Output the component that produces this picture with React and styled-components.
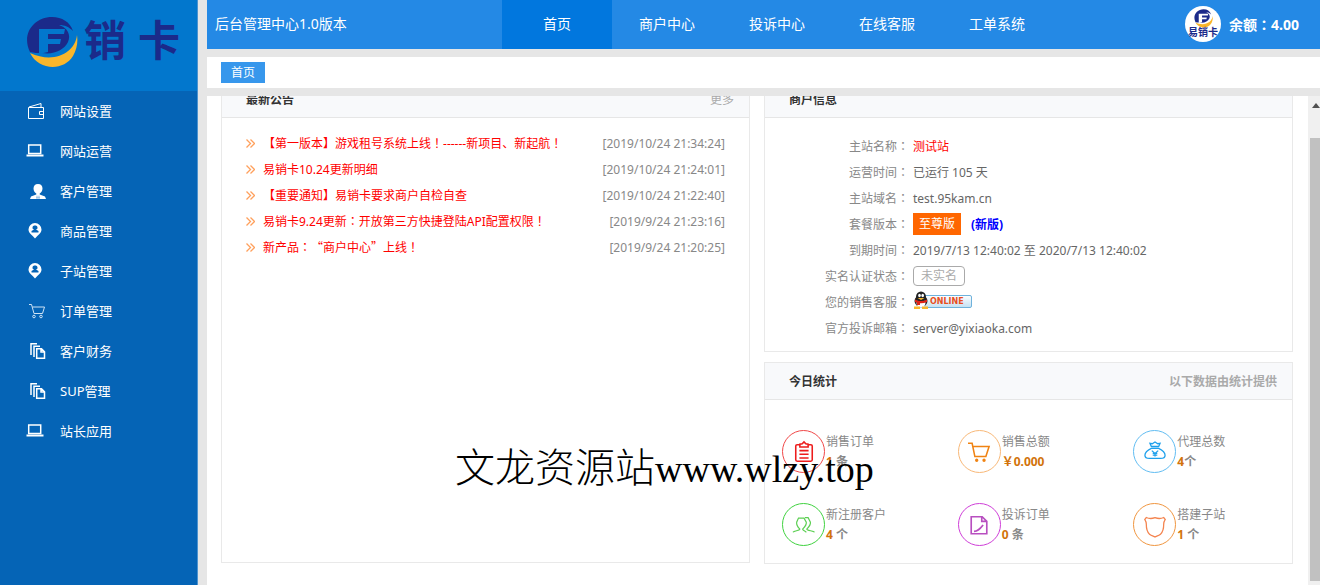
import React from 'react'
import styled, { createGlobalStyle } from 'styled-components'

const GlobalStyle = createGlobalStyle`
    *{
        box-sizing:border-box;
    }
    body{
        margin:0;
        background:#e6e6e6;
        font-family:"Noto Sans","Noto Sans CJK SC",sans-serif;
        font-size:12px;
        color:#666;
        text-spacing-trim:space-all;
    }
    a{
        color:inherit;
        text-decoration:none;
    }
    ul,dl,dd,h2,p{
        margin:0;
        padding:0;
        list-style:none;
    }
`
const Layout = styled.div`
    display:flex;
    gap:9px;
    height:100vh;
    overflow:hidden;
`
const Sidebar = styled.aside`
    flex:0 0 198px;
    background:#0564b6;
    border-right:1px solid #4d93cf;
`
const Logo = styled.a`
    display:flex;
    align-items:flex-start;
    gap:6px;
    height:91px;
    padding:16px 0 0 26px;
    background:#0277cd;
    svg{
        flex:none;
    }
`
const LogoName = styled.span`
    display:flex;
    gap:12px;
    font-family:"Noto Sans CJK SC",sans-serif;
    font-size:42px;
    line-height:44px;
    font-weight:700;
    color:#1b2a8a;
`
const MenuLink = styled.a`
    display:flex;
    align-items:center;
    height:40px;
    font-size:13px;
    color:#fff;
    svg{
        width:18px;
        height:18px;
        margin:0 15px 0 27px;
    }
    span{
        padding-bottom:2px;
    }
`
const Main = styled.div`
    flex:1;
    min-width:0;
    display:flex;
    flex-direction:column;
    gap:8px;
`
const Header = styled.header`
    flex:none;
    display:flex;
    height:49px;
    background:#2489e5;
    font-size:14px;
    line-height:47px;
    color:#fff;
`
const Version = styled.span`
    flex:0 0 295px;
    padding-left:8px;
`
const Nav = styled.nav`
    display:flex;
`
const NavLink = styled.a`
    width:110px;
    text-align:center;
    background:${props => props.$active ? '#0177de' : 'none'};
`
const Account = styled.div`
    display:flex;
    align-items:center;
    gap:8px;
    height:48px;
    margin-left:auto;
    padding-right:21px;
    font-weight:bold;
`
const TabBar = styled.div`
    flex:none;
    display:flex;
    align-items:center;
    height:31px;
    padding-left:14px;
    background:#fff;
`
const Tab = styled.button`
    height:21px;
    padding:0 10px;
    border:none;
    background:#3797ec;
    color:#fff;
    font:inherit;
    line-height:21px;
`
const Body = styled.div`
    flex:1;
    min-height:0;
    display:flex;
    background:#fff;
`
const Content = styled.main`
    flex:1;
    min-width:0;
    overflow-y:auto;
    scrollbar-width:none;
    display:flex;
    align-items:flex-start;
    gap:14px;
    padding:15px 15px 0 14px;
`
const Column = styled.div`
    flex:1;
    min-width:0;
    display:grid;
    gap:10px;
    padding-bottom:40px;
`
const Panel = styled.section`
    border:1px solid #e9e9e9;
    min-height:${props => props.$tall ? '483px' : '0'};
`
const PanelHead = styled.div`
    display:flex;
    align-items:center;
    justify-content:space-between;
    height:37px;
    padding:0 15px 0 24px;
    background:#f8f9fb;
    border-bottom:1px solid #e6e6e6;
    color:#aaa;
    h2{
        font-size:12px;
        color:#333;
    }
`
const NewsList = styled.ul`
    padding:12px 24px;
`
const NewsItem = styled.li`
    display:flex;
    align-items:center;
    height:26px;
    svg{
        flex:none;
        margin-right:8px;
    }
    a{
        color:#f00;
    }
    time{
        margin-left:auto;
        color:#888;
    }
`
const InfoList = styled.dl`
    display:grid;
    grid-template-columns:144px 1fr;
    grid-auto-rows:26px;
    column-gap:4px;
    align-items:center;
    padding:15px 0 10px;
    dt{
        text-align:right;
        color:#888;
    }
    dd{
        display:flex;
        align-items:center;
    }
`
const SiteName = styled.span`
    color:#f00;
`
const Package = styled.span`
    padding:0 6px;
    line-height:22px;
    background:#f60;
    color:#fff;
`
const NewVersion = styled.a`
    margin-left:10px;
    font-weight:bold;
    color:#00f;
`
const VerifyButton = styled.button`
    height:20px;
    padding:0 7px;
    border:1px solid #aaa;
    border-radius:4px;
    background:#fff;
    color:#aaa;
    font:inherit;
    line-height:18px;
`
const OnlineLink = styled.a`
    display:flex;
    padding-bottom:4px;
`
const Stats = styled.ul`
    display:grid;
    grid-template-columns:repeat(3,1fr);
    row-gap:30px;
    padding:30px 0 17px;
`
const Stat = styled.li`
    display:flex;
    align-items:center;
    gap:1px;
    height:43px;
    padding-left:17px;
    color:#888;
    line-height:20px;
    strong{
        font-weight:700;
        color:#d2730a;
    }
    b{
        display:block;
        white-space:pre;
    }
`
const StatIcon = styled.span`
    flex:none;
    display:flex;
    align-items:center;
    justify-content:center;
    width:43px;
    height:43px;
    border:1px solid ${props => props.$color};
    border-radius:50%;
`
const ScrollBar = styled.div`
    flex:0 0 12px;
    display:flex;
    flex-direction:column;
    align-items:flex-end;
    padding:7px 0 4px;
    background:#f0f0f0;
`
const Thumb = styled.div`
    flex:1;
    width:10px;
    margin-top:30px;
    background:#c1c1c1;
`
const Watermark = styled.p`
    position:absolute;
    left:455px;
    top:444px;
    display:flex;
    align-items:baseline;
    font-family:"Liberation Serif","Noto Sans CJK SC",serif;
    font-size:38px;
    line-height:50px;
    color:#000;
    pointer-events:none;
    span{
        font-size:40px;
        font-weight:300;
    }
`
const Wide = styled.span`
    font-family:"Noto Sans CJK TC",sans-serif;
`

//全角标点居中显示
const punct = text => text.split(/([：！“”])/).map((part, i) => (
    i % 2 ? <Wide key={i}>{part}</Wide> : part
))

const Mark = ({ size, letter }) => (
    <svg width={size} height={size} viewBox="0 0 52 52">
        <path fill="#1b2a8a" d="M4 36C-5 18 8 1 26 1c10 0 18 5 21 14-4-4-8-6-14-6 9 3 12 10 9 17-4 8-14 13-26 11-4 0-8 0-12-1z" />
        <path fill="#f9b62b" d="M4 37c9 18 34 18 43 3 4-7 5-14 4-21C49 37 28 48 4 37z" />
        <path fill={letter} d="M13 13h26l-1 5H22v5h13l-1 5H22v8l-9 2z" />
    </svg>
)

const Avatar = () => (
    <svg width="36" height="36" viewBox="0 0 36 36">
        <circle cx="18" cy="18" r="18" fill="#fff" />
        <svg x="9" y="3" width="19" height="19" viewBox="0 0 52 52"><Mark size={52} letter="#fff" /></svg>
        <text x="18" y="30" fontSize="10" fontWeight="700" textAnchor="middle" fill="#1b2a8a" fontFamily="Noto Sans CJK SC, sans-serif">易销卡</text>
    </svg>
)

const menuIcons = {
    wallet: <g fill="none" stroke="#fff"><path d="M1.500 5.500h15v11h-15zM2 5l12-3.500V5M16 9.500h-3.500v3H16" /></g>,
    laptop: <g><path fill="none" stroke="#fff" strokeWidth="1.500" d="M1.700 3h12v8.500h-12z" /><path fill="#fff" d="M-.5 12.500h17v2h-17z" /></g>,
    user: <path fill="#fff" d="M11 2c3 0 4.500 2 4.500 4.500S14 11 12.700 11.500v1L18 14.500 19 17H3l1-2.500 5.300-2v-1C8 11 6.500 9 6.500 6.500S8 2 11 2zM10 13l-.5 3.500h1zM12 13l-.5 3.500h1z" fillRule="evenodd" />,
    pin: <path fill="#fff" fillRule="evenodd" d="M8 1a6.500 6.500 0 0 1 6.500 6.500C14.500 11 11 13 8 16.500 5 13 1.500 11 1.500 7.500A6.500 6.500 0 0 1 8 1zM8 3.500a2 2 0 0 0-1 4L4.500 9v1.500h7V9L9 7.500a2 2 0 0 0-1-4z" />,
    cart: <g fill="none" stroke="#cfe3f5"><path d="M2 2.500h2.500l2.500 9h8.500L17.500 5H5.500" /><circle cx="7" cy="14.500" r="1.300" /><circle cx="14" cy="14.500" r="1.300" /></g>,
    files: <g fill="none" stroke="#fff" strokeWidth="1.500"><path d="M4 13V1.700h6M7 15V4.200h6M9.700 6.700h4.800l3 3v6.500H9.700zM14 7v3h3.500" /></g>
}

const statIcons = {
    order: <g fill="none" stroke="#ed1c1c" strokeWidth="1.700"><path d="M8 4H4.500Q3 4 3 5.500v15Q3 22 4.500 22h15q1.500 0 1.500-1.500v-15Q21 4 19.500 4H16M7.500 6.500v-3l2.500-.5 2-2 2 2 2.500.5v3zM7 10.500h10M7 14.500h10M7 18.500h10" /></g>,
    cart: <g fill="none" stroke="#f08313" strokeWidth="1.700"><path d="M0 2.500h4.500l3 14.500h12l3.500-11H6" /><circle cx="9.500" cy="21" r="1" fill="#f08313" /><circle cx="17.500" cy="21" r="1" fill="#f08313" /></g>,
    money: <g fill="none" stroke="#1ea0ec" strokeWidth="1.400"><path d="M8 6 6.500 2.500 9 3l3-2 3 2 2.500-.5L16 6zM8 8h8M8 8c-4 2-7 5-7 7.500S2.500 19 6 19h12c3.500 0 5-1 5-3.500S20 10 16 8M8.500 10.500l3.500 3 3.500-3M12 13.500V17M9.500 13.500h5M9.500 15.500h5" /></g>,
    users: <g fill="none" stroke="#5ccf52" strokeWidth="1.300"><path d="M0 20c1-2 7-1.500 7.500-3.500C5 14 3.500 12 4 9l2-4.500h6L14.500 9c.5 3-1.500 5-4 7.500.5 2 3 2 4 3.500M13 4h3.500L19 9c.5 3-1.500 5-4 7.500.5 2 7.500 1.500 8.500 3.500" /></g>,
    complaint: <g fill="none" stroke="#b84fc0" strokeWidth="1.800"><path d="M3.500 3h12l5 5v13.500h-17zM15 3v5h5M6.500 19c4 0 6-2 10-7" /></g>,
    shield: <path fill="none" stroke="#f4844f" strokeWidth="1.400" d="M12 4C8 5.500 5 5 2.500 3.800L.8 6c1 1.500 1.700 2 1.700 5 0 6 .5 8.500 3.500 11 2 1.700 4 2 6 3 2-1 4-1.300 6-3 3-2.500 3.500-5 3.500-11 0-3 .7-3.500 1.700-5l-1.700-2.200C19 5 16 5.500 12 4z" />
}

const Online = () => (
    <svg width="60" height="18" viewBox="0 0 60 18">
        <defs>
            <linearGradient id="online" x1="0" y1="0" x2="0" y2="1">
                <stop offset="0" stopColor="#fff" />
                <stop offset="1" stopColor="#c3e1f3" />
            </linearGradient>
        </defs>
        <rect x="6.500" y="4.500" width="52" height="12" rx="1.500" fill="url(#online)" stroke="#6fb2dc" />
        <ellipse cx="8" cy="10" rx="6.500" ry="6" fill="#222" />
        <ellipse cx="8" cy="12" rx="4.500" ry="4.500" fill="#fff" />
        <ellipse cx="8" cy="6" rx="5" ry="5.500" fill="#222" />
        <ellipse cx="6.500" cy="4.500" rx="1.300" ry="1.700" fill="#fff" />
        <ellipse cx="9.700" cy="4.500" rx="1.300" ry="1.700" fill="#fff" />
        <path fill="#f9b62b" d="M4.500 7h7L8 9zM1 15.500h6V18H1zM9 15.500h6V18H9z" />
        <path fill="#e02418" d="M2 8.500q6 3 12 0v2.500q-6 2.500-12 0zM4 11h3v3H4z" />
        <text x="17" y="13" fontSize="8" fontWeight="700" fill="#e8501e" fontFamily="DejaVu Sans, sans-serif">ONLINE</text>
    </svg>
)

const menu = [
    ['网站设置', 'wallet'],
    ['网站运营', 'laptop'],
    ['客户管理', 'user'],
    ['商品管理', 'pin'],
    ['子站管理', 'pin'],
    ['订单管理', 'cart'],
    ['客户财务', 'files'],
    ['SUP管理', 'files'],
    ['站长应用', 'laptop']
]
const nav = ['首页', '商户中心', '投诉中心', '在线客服', '工单系统']
const news = [
    ['【第一版本】游戏租号系统上线！------新项目、新起航！', '2019/10/24 21:34:24'],
    ['易销卡10.24更新明细', '2019/10/24 21:24:01'],
    ['【重要通知】易销卡要求商户自检自查', '2019/10/24 21:22:40'],
    ['易销卡9.24更新：开放第三方快捷登陆API配置权限！', '2019/9/24 21:23:16'],
    ['新产品：“商户中心”上线！', '2019/9/24 21:20:25']
]
const info = [
    ['主站名称', <SiteName>测试站</SiteName>],
    ['运营时间', '已运行 105 天'],
    ['主站域名', 'test.95kam.cn'],
    ['套餐版本', <><Package>至尊版</Package><NewVersion href="#">(新版)</NewVersion></>],
    ['到期时间', '2019/7/13 12:40:02 至 2020/7/13 12:40:02'],
    ['实名认证状态', <VerifyButton>未实名</VerifyButton>],
    ['您的销售客服', <OnlineLink href="#" aria-label="QQ"><Online /></OnlineLink>],
    ['官方投诉邮箱', 'server@yixiaoka.com']
]
const stats = [
    ['销售订单', '1', ' 条', 'order', '#f04848'],
    ['销售总额', '￥0.000', '', 'cart', '#f8b878'],
    ['代理总数', '4', '个', 'money', '#62bdf2'],
    ['新注册客户', '4', ' 个', 'users', '#3fd23f'],
    ['投诉订单', '0', ' 条', 'complaint', '#cf3fd8'],
    ['搭建子站', '1', ' 个', 'shield', '#f09640']
]

class App extends React.Component{
    content = React.createRef()
    componentDidMount(){
        this.content.current.scrollTop = 31
    }
    render(){
        return (
            <Layout>
                <GlobalStyle />
                <Sidebar>
                    <Logo href="#">
                        <Mark size={52} letter="#0277cd" />
                        <LogoName><span>销</span><span>卡</span></LogoName>
                    </Logo>
                    {
                        menu.map(([name, icon]) => (
                            <MenuLink href="#" key={name}>
                                <svg viewBox="0 0 18 18" overflow="visible">{menuIcons[icon]}</svg>
                                <span>{name}</span>
                            </MenuLink>
                        ))
                    }
                </Sidebar>
                <Main>
                    <Header>
                        <Version>后台管理中心1.0版本</Version>
                        <Nav>
                            {nav.map((name, i) => <NavLink href="#" key={name} $active={i === 0}>{name}</NavLink>)}
                        </Nav>
                        <Account>
                            <Avatar />
                            <span>{punct('余额：4.00')}</span>
                        </Account>
                    </Header>
                    <TabBar>
                        <Tab>首页</Tab>
                    </TabBar>
                    <Body>
                        <Content ref={this.content}>
                            <Column>
                                <Panel $tall>
                                    <PanelHead>
                                        <h2>最新公告</h2>
                                        <a href="#">更多</a>
                                    </PanelHead>
                                    <NewsList>
                                        {
                                            news.map(([title, time]) => (
                                                <NewsItem key={title}>
                                                    <svg width="9" height="9" viewBox="0 0 9 9" fill="none" stroke="#ffa05c" strokeWidth="1.300"><path d="m.5.500 4 4-4 4M4.500.500l4 4-4 4" /></svg>
                                                    <a href="#">{punct(title)}</a>
                                                    <time>[{time}]</time>
                                                </NewsItem>
                                            ))
                                        }
                                    </NewsList>
                                </Panel>
                            </Column>
                            <Column>
                                <Panel>
                                    <PanelHead>
                                        <h2>商户信息</h2>
                                    </PanelHead>
                                    <InfoList>
                                        {
                                            info.map(([label, value]) => (
                                                <React.Fragment key={label}>
                                                    <dt>{punct(label + '：')}</dt>
                                                    <dd>{value}</dd>
                                                </React.Fragment>
                                            ))
                                        }
                                    </InfoList>
                                </Panel>
                                <Panel>
                                    <PanelHead>
                                        <h2>今日统计</h2>
                                        <b>以下数据由统计提供</b>
                                    </PanelHead>
                                    <Stats>
                                        {
                                            stats.map(([label, value, unit, icon, color]) => (
                                                <Stat key={label}>
                                                    <StatIcon $color={color}>
                                                        <svg width="22" height="22" viewBox="0 0 24 24" overflow="visible">{statIcons[icon]}</svg>
                                                    </StatIcon>
                                                    <div>
                                                        <p>{label}</p>
                                                        <b><strong>{value}</strong>{unit}</b>
                                                    </div>
                                                </Stat>
                                            ))
                                        }
                                    </Stats>
                                </Panel>
                            </Column>
                        </Content>
                        <ScrollBar>
                            <svg width="8" height="5" viewBox="0 0 8 5"><path fill="#505050" d="M0 5 4 0l4 5z" /></svg>
                            <Thumb />
                        </ScrollBar>
                    </Body>
                </Main>
                <Watermark><span>文龙资源站</span>www.wlzy.top</Watermark>
            </Layout>
        )
    }
}

export default App
